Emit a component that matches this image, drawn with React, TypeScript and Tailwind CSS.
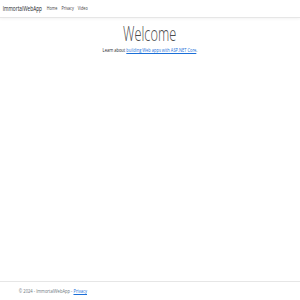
import React from 'react';

const sans = { fontFamily: "'Open Sans', 'Liberation Sans', sans-serif" };

export default function App() {
  return (
    <div className="flex min-h-[300px] flex-col bg-white text-[#212529]" style={sans}>
      {/* Navbar */}
      <header className="h-[18px] border-b border-[#e6e6e6] bg-white shadow-[0_1px_3px_rgba(0,0,0,0.05)]">
        <nav className="flex h-full origin-left scale-x-[0.68] items-center pl-[4px]">
          <a href="#" className="text-[7px] leading-none text-[#212529]">ImmortalWebApp</a>
          <ul className="ml-[7px] flex items-center gap-[6px] text-[5.5px] leading-none text-[#3c3c3c]">
            <li><a href="#">Home</a></li>
            <li><a href="#">Privacy</a></li>
            <li><a href="#">Video</a></li>
          </ul>
        </nav>
      </header>

      {/* Main */}
      <main className="flex-1 pt-[5px] text-center">
        <h1 className="inline-block scale-x-[0.64] text-[20px] font-light leading-[22px] text-[#4a4a4a]">Welcome</h1>
        <p className="scale-x-[0.8] text-[5px] leading-[6px] text-[#212529]">
          Learn about <a href="#" className="text-[#1b6fd8] underline">building Web apps with ASP.NET Core</a>.
        </p>
      </main>

      {/* Footer */}
      <footer className="h-[19px] border-t border-[#e6e6e6] pt-[6px] text-[5px] leading-[6px] text-[#6c757d]">
        <div className="origin-left scale-x-[0.82] pl-[23px]">
          © 2024 - ImmortalWebApp - <a href="#" className="text-[#1b6fd8] underline">Privacy</a>
        </div>
      </footer>
    </div>
  );
}
